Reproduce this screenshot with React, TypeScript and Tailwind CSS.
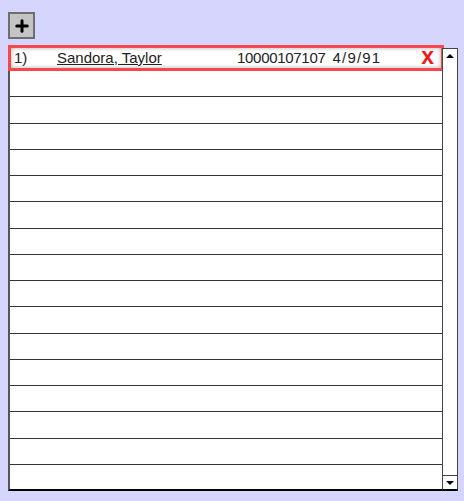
import { Plus } from "lucide-react"

const font = { fontFamily: '"Liberation Sans", Arial, sans-serif' }

export default function App() {
  const emptyRows = Array.from({ length: 16 }, (_, i) => i)

  return (
    <div className="w-[464px] h-[501px] bg-[#d5d5fd] pl-2 pt-3 overflow-hidden" style={font}>
      {/* add button */}
      <button className="w-[27px] h-[27px] flex items-center justify-center bg-[#c4c4c4] border-2 border-[#6e6e6e]">
        <Plus className="w-[18px] h-[18px] text-black" strokeWidth={4} />
      </button>

      {/* list */}
      <div className="mt-[6px] flex w-[450px]">
        <div className="w-[434px] border-l-2 border-[#555] border-b-2 border-b-black bg-white">
          <div className="h-[26px] -ml-[2px] w-[436px] border-[3px] border-[#f4484c] shadow-[inset_0_0_4px_rgba(0,0,0,0.35)] flex items-center text-[15px] text-[#222] pl-[3px] pr-[7px]">
            <span className="w-[43px]">1)</span>
            <span className="underline w-[180px]">Sandora, Taylor</span>
            <span className="tracking-[-0.3px]">10000107107</span>
            <span className="ml-[7px] tracking-[1.2px]">4/9/91</span>
            <span className="ml-auto text-[#f01818] font-bold text-[23px] leading-none -mt-[3px]">x</span>
          </div>
          {emptyRows.map((i) => (
            <div
              key={i}
              className={i === 15 ? "h-[24.25px]" : "h-[26.25px] border-b border-[#333]"}
            />
          ))}
        </div>
        <div className="w-[16px] mt-[3px] bg-white border-x border-t border-[#444] border-b-2 border-b-black flex flex-col justify-between">
          <div className="h-[14px] flex items-center justify-center">
            <div className="w-0 h-0 border-l-[4px] border-r-[4px] border-b-[4px] border-l-transparent border-r-transparent border-b-black" />
          </div>
          <div className="h-[14px] border-t border-[#444] flex items-center justify-center">
            <div className="w-0 h-0 border-l-[4px] border-r-[4px] border-t-[4px] border-l-transparent border-r-transparent border-t-black" />
          </div>
        </div>
      </div>
    </div>
  )
}
